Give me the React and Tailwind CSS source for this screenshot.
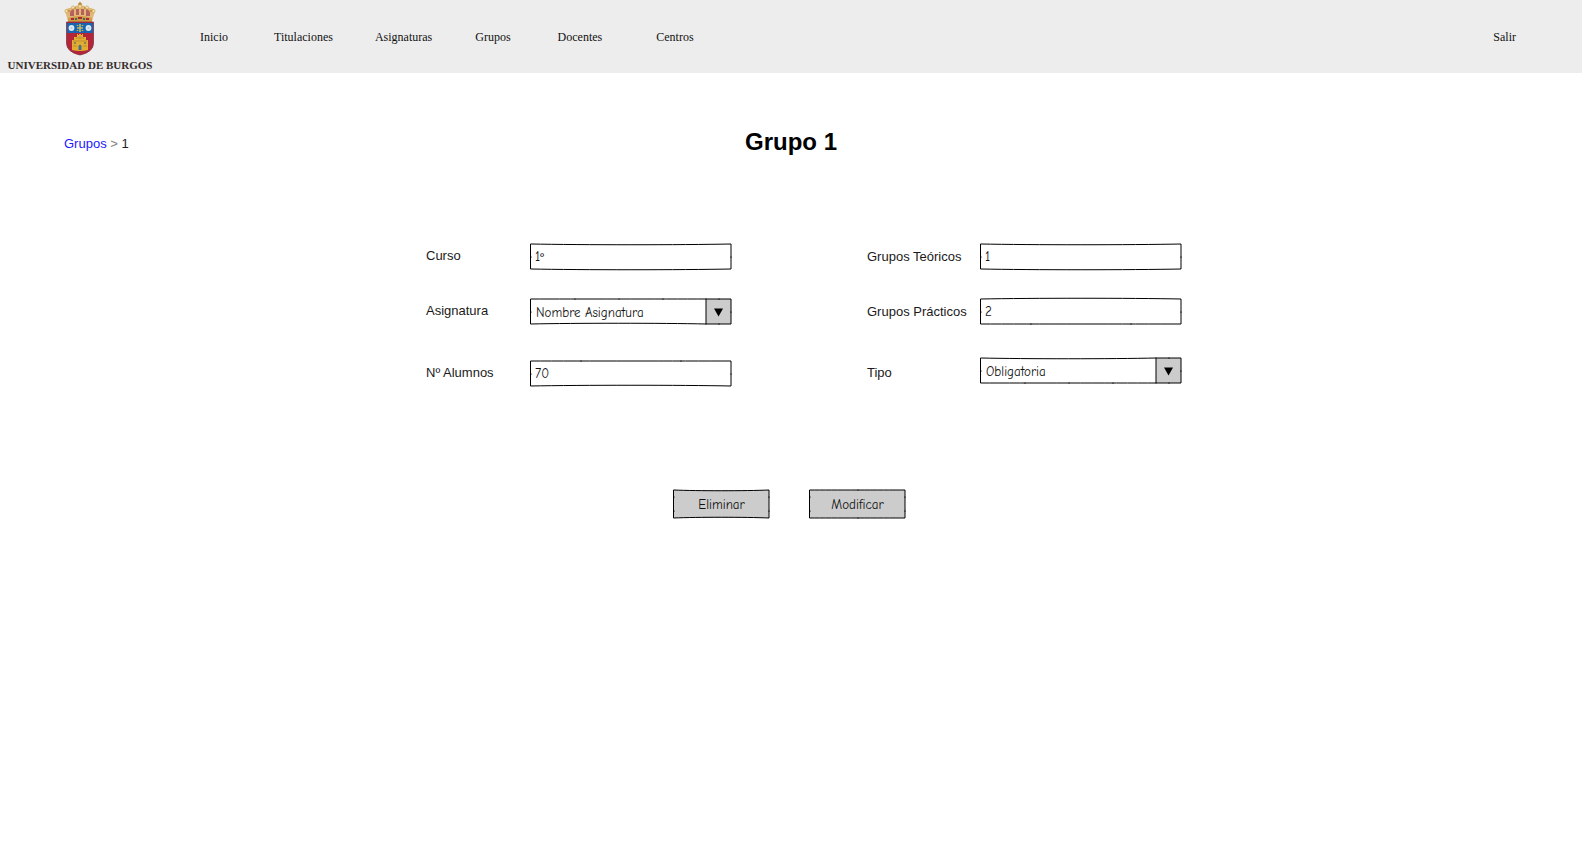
const HAND = "font-['Comic_Sans_MS','Comic_Neue',Lato,sans-serif]";

function Frame({ w, h, top = 0, bottom = 0, topTicks = [], bottomTicks = [], sideTicks = [], split }) {
  const inner = split ?? w;
  const a = inner * 0.25;
  const b = inner * 0.75;
  return (
    <svg
      className="pointer-events-none absolute top-0 left-0 overflow-visible"
      width={w}
      height={h}
      fill="none"
      stroke="#000"
      strokeLinecap="square"
      aria-hidden="true"
    >
      <path d={`M0 0C${a} ${top} ${b} ${top} ${inner} 0H${w}V${h}H${inner}C${b} ${h + bottom} ${a} ${h + bottom} 0 ${h}Z`} />
      {split && <path d={`M${split} 0V${h}`} />}
      {split && <path d={`M${split + 8} ${h / 2 - 3}h9l-4.500 8z`} fill="#000" stroke="none" />}
      {topTicks.map((x) => <path key={`t${x}`} d={`M${x} 0v.2`} />)}
      {bottomTicks.map((x) => <path key={`b${x}`} d={`M${x} ${h}v.2`} />)}
      {sideTicks.map((y) => <path key={`s${y}`} d={`M0 ${y}v.2M${w} ${y}v.2`} />)}
    </svg>
  );
}

function Label({ id, children }) {
  return <label htmlFor={id} className="block text-[13px] leading-6 whitespace-nowrap text-[#1a1a1a]">{children}</label>;
}

function TextField({ id, value, frame }) {
  return (
    <div className="relative h-[25px] w-[200px]">
      <input id={id} defaultValue={value} className={`h-full w-full bg-transparent pl-1 text-[13px] text-[#111] ${HAND}`} />
      <Frame w={200} h={25} sideTicks={[13]} {...frame} />
    </div>
  );
}

function SelectField({ id, value, frame }) {
  return (
    <div className="relative h-[25px] w-[200px] bg-[linear-gradient(90deg,transparent_175px,#ccc_175px)]">
      <select id={id} className={`h-full w-full appearance-none bg-transparent pt-[3px] pl-[5px] text-[13px] text-[#111] ${HAND}`}>
        <option>{value}</option>
      </select>
      <Frame w={200} h={25} split={175} sideTicks={[13]} {...frame} />
    </div>
  );
}

function SketchButton({ children, frame }) {
  return (
    <button type="button" className={`relative h-7 w-[95px] bg-[#ccc] pt-[2px] text-[13px] text-[#111] ${HAND}`}>
      {children}
      <Frame w={95} h={28} sideTicks={[7, 21]} {...frame} />
    </button>
  );
}

function Logo() {
  return (
    <a href="#inicio" className="flex w-[160px] flex-col items-center pt-[2px] text-[#332c2c]">
      <svg width="32" height="54" viewBox="0 0 32 54" aria-hidden="true">
        <path d="M4 19 1 9Q4 5 9 6q3-3 7-3t7 3q5-1 8 3l-3 10z" fill="#e0b878" />
        <path d="M6 14Q5 8 10 7v7zM26 14q1-6-4-7v7zM12 13V7h3v6zM17 13V7h3v6z" fill="#b8605a" />
        <path d="M16 0v6M14 2h4M3 9h3M26 9h3M9 6h3M20 6h3" stroke="#b58a3c" strokeWidth="1.500" />
        <path d="M4 16Q16 12 28 16v4H4z" fill="#d29a45" />
        <path d="M7 17h3M14 16h4M22 17h3" stroke="#a52a35" strokeWidth="2" />
        <path d="M11 17h2M19 17h2" stroke="#37745c" strokeWidth="2" />
        <g fill="#f1dfae" stroke="#c99b45" strokeWidth=".6">
          <circle cx="2.500" cy="9" r="1.600" /><circle cx="9" cy="5.500" r="1.600" />
          <circle cx="16" cy="4.500" r="1.700" /><circle cx="23" cy="5.500" r="1.600" /><circle cx="29.500" cy="9" r="1.600" />
        </g>
        <path d="M2.500 20h27v21q0 9-13.500 12Q2.500 50 2.500 41z" fill="#b3263a" stroke="#81333c" strokeWidth=".8" />
        <path d="M3 21h26v10H3z" fill="#1765b0" />
        <circle cx="7.500" cy="26" r="2.900" fill="#dce8f4" /><circle cx="24.500" cy="26" r="2.900" fill="#dce8f4" />
        <circle cx="7.500" cy="26" r="1" fill="#b5c5d8" /><circle cx="24.500" cy="26" r="1" fill="#b5c5d8" />
        <path d="M16 22v8M13 26h6M13.500 23v1M18.500 23v1M13.500 28v1M18.500 28v1" stroke="#c5b95b" strokeWidth="1.600" />
        <path d="M8 48V38h2v-3h3v-3h1v1h1v-1h2v1h1v-1h1v3h3v3h2v10q-8 2-16 0z" fill="#e2ae32" />
        <path d="M9 39h14M12 36h8M9 44h4M19 44h4M16 34v3" stroke="#c08a30" />
        <path d="M14.500 48v-4q1.500-3 3 0v4z" fill="#4c7081" />
        <path d="M11 40v2M21 40v2" stroke="#6d745c" strokeWidth="1.500" />
      </svg>
      <span className="pt-px font-['Liberation_Serif',serif] text-[11px] leading-4 font-bold whitespace-nowrap">UNIVERSIDAD DE BURGOS</span>
    </a>
  );
}

export default function App() {
  return (
    <div className="min-h-screen bg-white font-['Liberation_Sans',Arial,sans-serif]">
      <header className="flex h-[73px] bg-[#ededed] font-['Liberation_Serif',serif] text-xs text-[#111]">
        <Logo />
        <nav className="flex flex-1 items-center pr-[66px] pl-10">
          <a href="#inicio" className="mr-[46px]">Inicio</a>
          <a href="#titulaciones" className="mr-[42px]">Titulaciones</a>
          <a href="#asignaturas" className="mr-[43px]">Asignaturas</a>
          <a href="#grupos" className="mr-[47px]">Grupos</a>
          <a href="#docentes" className="mr-[54px]">Docentes</a>
          <a href="#centros">Centros</a>
          <a href="#salir" className="ml-auto">Salir</a>
        </nav>
      </header>

      <main>
        <div className="grid grid-cols-[1fr_auto_1fr] items-center px-16 pt-[50px]">
          <div className="pt-1 text-[13px] leading-6 text-[#222]">
            <a href="#grupos" className="text-[#1a1aff]">Grupos</a> <span className="text-[#808080]">&gt;</span> <span>1</span>
          </div>
          <h1 className="text-2xl leading-[38px] font-bold text-black">Grupo 1</h1>
        </div>

        <form>
          <div className="flex justify-center gap-[136px] pt-[83px] pl-[25px]">
            <div className="grid grid-cols-[105px_200px] content-start">
              <div className="h-[55px]"><Label id="curso">Curso</Label></div>
              <TextField id="curso" value="1º" frame={{ top: 1, bottom: 1 }} />
              <div className="h-[62px]"><Label id="asignatura">Asignatura</Label></div>
              <SelectField id="asignatura" value="Nombre Asignatura" frame={{ bottom: -1, topTicks: [44, 88, 132, 188], bottomTicks: [188] }} />
              <Label id="alumnos">Nº Alumnos</Label>
              <TextField id="alumnos" value="70" frame={{ bottom: -1, topTicks: [50, 150] }} />
            </div>
            <div className="grid grid-cols-[114px_200px] content-start">
              <div className="h-[55px] pt-px"><Label id="teoricos">Grupos Teóricos</Label></div>
              <TextField id="teoricos" value="1" frame={{ top: 1, bottom: 1 }} />
              <div className="h-[59px] pt-px"><Label id="practicos">Grupos Prácticos</Label></div>
              <TextField id="practicos" value="2" frame={{ top: -1, bottomTicks: [50, 150] }} />
              <div className="pt-[3px]"><Label id="tipo">Tipo</Label></div>
              <SelectField id="tipo" value="Obligatoria" frame={{ top: 1, topTicks: [188], bottomTicks: [44, 88, 132, 188] }} />
            </div>
          </div>
          <div className="flex justify-center gap-[41px] pt-[104px] pr-[3px]">
            <SketchButton frame={{ top: 1, bottom: -1 }}>Eliminar</SketchButton>
            <SketchButton frame={{ topTicks: [48], bottomTicks: [48] }}>Modificar</SketchButton>
          </div>
        </form>
      </main>
    </div>
  );
}
